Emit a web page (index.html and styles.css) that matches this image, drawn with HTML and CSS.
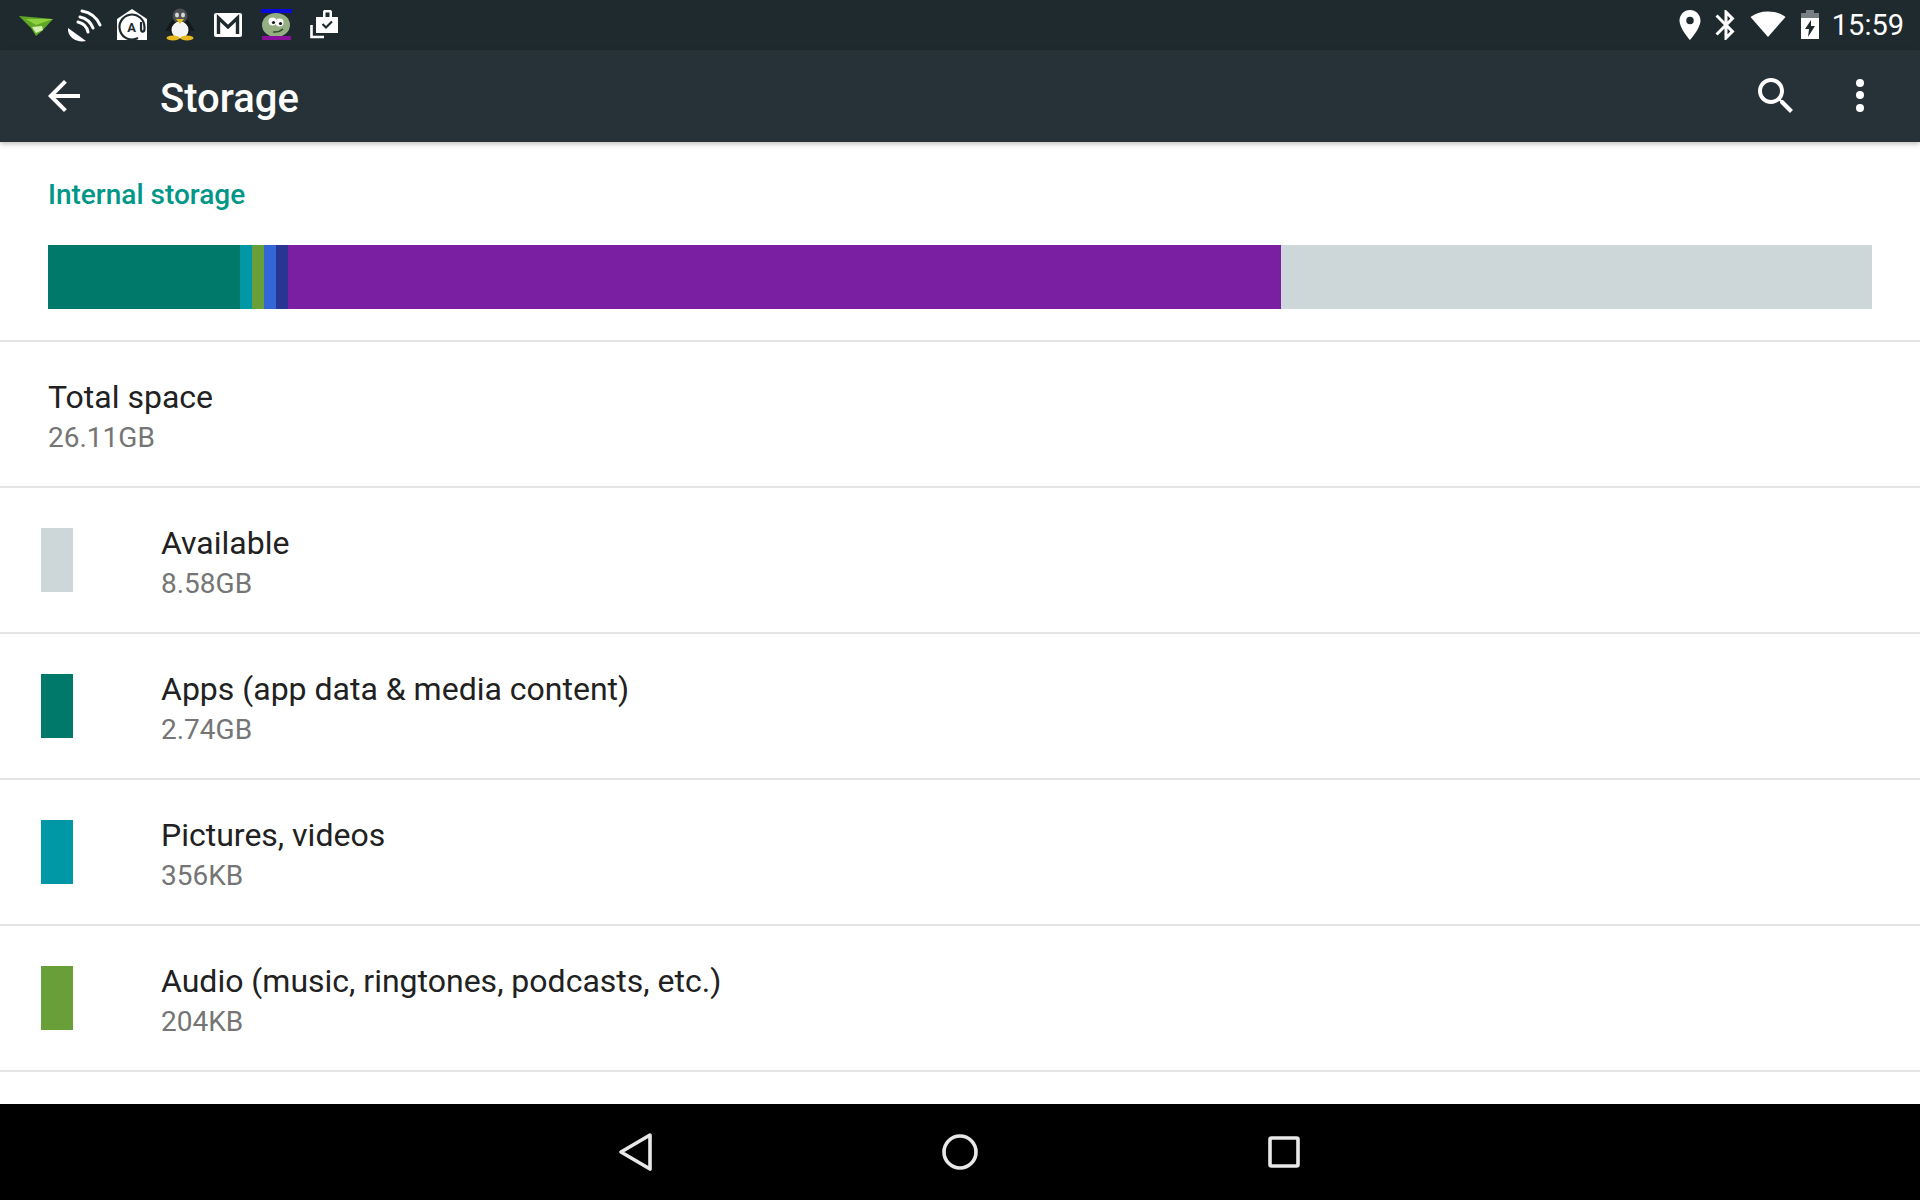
FILE: index.html
```html
<!DOCTYPE html>
<html lang="en">
<head>
    <meta charset="UTF-8">
    <title>Storage</title>
    <link rel="stylesheet" href="styles.css">
</head>
<body>
    <div class="status-bar">
        <div class="status-left">
            <span class="notif">
                <svg width="36" height="36" viewBox="0 0 36 36">
                    <path d="M1 9 L35 12 L24 24 L18 29 L13 21 Z" fill="#5fa826"/>
                    <path d="M8 12 L35 12 L18 18 Z" fill="#8fd13f"/>
                    <path d="M14 20 L24 19 L25 23 L18 26 Z" fill="#d4efb0"/>
                </svg>
            </span>
            <span class="notif">
                <svg width="36" height="36" viewBox="0 0 36 36">
                    <path d="M2 21 L20 34 C12 36 1 31 2 21 Z" fill="#fff"/>
                    <g fill="none" stroke="#fff" stroke-width="3" stroke-linecap="round">
                        <path d="M12 15 A13 13 0 0 1 22 25"/>
                        <path d="M14 10 A18 18 0 0 1 27 21"/>
                        <path d="M16 4 A24 24 0 0 1 34 18"/>
                    </g>
                </svg>
            </span>
            <span class="notif">
                <svg width="36" height="36" viewBox="0 0 36 36">
                    <path d="M3 12 L18 2 L33 12 V33 H3 Z" fill="#fff"/>
                    <path d="M24 31 A12.500 12.500 0 1 1 30.500 20 V22 C30.500 25.500 27 25.500 27 22 V15" fill="none" stroke="#1f2a2f" stroke-width="2.200"/>
                    <text x="17.500" y="25" class="aqua-a">A</text>
                </svg>
            </span>
            <span class="notif">
                <svg width="36" height="36" viewBox="0 0 36 36">
                    <path d="M9 15 L3 24 L9 23 Z M27 15 L33 24 L27 23 Z" fill="#14181a"/>
                    <ellipse cx="18" cy="21" rx="11" ry="11" fill="#14181a"/>
                    <ellipse cx="18" cy="9" rx="7.500" ry="7.500" fill="#4c5053"/>
                    <ellipse cx="15" cy="8" rx="2" ry="2.500" fill="#d8d8d8"/>
                    <ellipse cx="21" cy="8" rx="2" ry="2.500" fill="#d8d8d8"/>
                    <ellipse cx="18" cy="23" rx="8.500" ry="8.500" fill="#f4f4f4"/>
                    <path d="M14 12 L22 12 L18 17 Z" fill="#e8c02a"/>
                    <ellipse cx="11" cy="31" rx="6.500" ry="2.500" fill="#e8b81f"/>
                    <ellipse cx="25" cy="31" rx="6.500" ry="2.500" fill="#e8b81f"/>
                </svg>
            </span>
            <span class="notif">
                <svg width="36" height="36" viewBox="0 0 36 36">
                    <rect x="4" y="6" width="28" height="24" rx="2" fill="#fff"/>
                    <path d="M8.500 27 V11 L18 20 L27.500 11 V27" fill="none" stroke="#1f2a2f" stroke-width="3.400"/>
                </svg>
            </span>
            <span class="notif">
                <svg width="36" height="36" viewBox="0 0 36 36">
                    <rect x="3" y="2" width="31" height="4" fill="#0a0ad8"/>
                    <ellipse cx="18" cy="18" rx="14" ry="12" fill="#94b083"/>
                    <circle cx="14.500" cy="14.500" r="4" fill="#fff"/>
                    <circle cx="21.500" cy="15.500" r="4" fill="#fff"/>
                    <circle cx="15.500" cy="15.500" r="1.600" fill="#1a1a1a"/>
                    <circle cx="22.500" cy="16.500" r="1.600" fill="#1a1a1a"/>
                    <path d="M15 25 Q21 25.500 25 22" fill="none" stroke="#2c4a2c" stroke-width="1.400"/>
                    <rect x="4" y="29" width="29" height="4" fill="#8a109c"/>
                </svg>
            </span>
            <span class="notif">
                <svg width="36" height="36" viewBox="0 0 36 36">
                    <path d="M5.500 18 V30 H18" fill="none" stroke="#fff" stroke-width="2.600"/>
                    <path d="M10 10 H17 V5 C17 3.500 18 3 19 3 H24 C25 3 26 3.500 26 5 V10 H32 V26 H10 Z" fill="#fff"/>
                    <rect x="19.500" y="5.500" width="4" height="4.500" fill="#1f2a2f"/>
                    <path d="M16.500 17 L20 20.500 L26 14.500" fill="none" stroke="#1f2a2f" stroke-width="2.200"/>
                </svg>
            </span>
        </div>
        <div class="status-right">
            <svg class="sys-place" width="36" height="36" viewBox="0 0 24 24"><path fill="#fff" d="M12 2C8.130 2 5 5.130 5 9c0 5.250 7 13 7 13s7-7.750 7-13c0-3.870-3.130-7-7-7zm0 9.500a2.500 2.500 0 0 1 0-5 2.500 2.500 0 0 1 0 5z"/></svg>
            <svg class="sys-bt" width="36" height="36" viewBox="0 0 24 24"><path fill="#fff" d="M17.710 7.710L12 2h-1v7.590L6.410 5 5 6.410 10.590 12 5 17.590 6.410 19 11 14.410V22h1l5.710-5.710-4.300-4.290 4.300-4.290zM13 5.830l1.880 1.880L13 9.590V5.830zm1.880 10.460L13 18.170v-3.760l1.880 1.880z"/></svg>
            <svg class="sys-wifi" width="36" height="30" viewBox="0 0 36 30"><path fill="#fff" d="M18 27 L0.500 7 C5 3.500 11 1.500 18 1.500 S31 3.500 35.500 7 Z"/></svg>
            <svg class="sys-batt" width="20" height="30" viewBox="0 0 20 30">
                <path fill="#fff" opacity="0.4" d="M6 0 H14 V3 H19 V8 H1 V3 H6 Z"/>
                <path fill="#fff" d="M1 8 H19 V29 H1 Z M11 10 L5 19 H9 L8 27 L15 16 H11 Z" fill-rule="evenodd"/>
            </svg>
            <span class="clock">15:59</span>
        </div>
    </div>

    <div class="app-bar">
        <svg class="back-icon" width="48" height="48" viewBox="0 0 24 24"><path fill="#fff" d="M20 11H7.830l5.590-5.590L12 4l-8 8 8 8 1.410-1.410L7.830 13H20v-2z"/></svg>
        <div class="app-title">Storage</div>
        <svg class="search-icon" width="48" height="48" viewBox="0 0 24 24"><path fill="#fff" d="M15.500 14h-.790l-.280-.270C15.410 12.590 16 11.110 16 9.500 16 5.910 13.090 3 9.500 3S3 5.910 3 9.500 5.910 16 9.500 16c1.610 0 3.090-.590 4.230-1.570l.270.280v.790l5 4.990L20.490 19l-4.990-5zm-6 0C7.010 14 5 11.990 5 9.500S7.010 5 9.500 5 14 7.010 14 9.500 11.990 14 9.500 14z"/></svg>
        <svg class="more-icon" width="12" height="36" viewBox="0 0 12 36">
            <circle cx="6" cy="5" r="4" fill="#fff"/>
            <circle cx="6" cy="17" r="4" fill="#fff"/>
            <circle cx="6" cy="30" r="4" fill="#fff"/>
        </svg>
    </div>

    <div class="content">
        <div class="section-title">Internal storage</div>
        <div class="usage-bar">
            <div class="seg seg-apps"></div>
            <div class="seg seg-pics"></div>
            <div class="seg seg-audio"></div>
            <div class="seg seg-blue"></div>
            <div class="seg seg-indigo"></div>
            <div class="seg seg-purple"></div>
            <div class="seg seg-free"></div>
        </div>

        <div class="row row-total">
            <div class="row-text">
                <div class="row-name">Total space</div>
                <div class="row-size">26.11GB</div>
            </div>
        </div>
        <div class="row">
            <div class="swatch sw-free"></div>
            <div class="row-text">
                <div class="row-name">Available</div>
                <div class="row-size">8.58GB</div>
            </div>
        </div>
        <div class="row">
            <div class="swatch sw-apps"></div>
            <div class="row-text">
                <div class="row-name">Apps (app data &amp; media content)</div>
                <div class="row-size">2.74GB</div>
            </div>
        </div>
        <div class="row">
            <div class="swatch sw-pics"></div>
            <div class="row-text">
                <div class="row-name">Pictures, videos</div>
                <div class="row-size">356KB</div>
            </div>
        </div>
        <div class="row">
            <div class="swatch sw-audio"></div>
            <div class="row-text">
                <div class="row-name">Audio (music, ringtones, podcasts, etc.)</div>
                <div class="row-size">204KB</div>
            </div>
        </div>
    </div>

    <div class="nav-bar">
        <svg width="40" height="40" viewBox="0 0 40 40"><path d="M34 3 L5 20 L34 37 Z" fill="none" stroke="#e8e8e8" stroke-width="3.600" stroke-linejoin="round"/></svg>
        <svg width="40" height="40" viewBox="0 0 40 40"><circle cx="20" cy="20" r="16" fill="none" stroke="#e8e8e8" stroke-width="3.600"/></svg>
        <svg width="40" height="40" viewBox="0 0 40 40"><rect x="6" y="6" width="28" height="28" rx="1.500" fill="none" stroke="#e8e8e8" stroke-width="3.600"/></svg>
    </div>
</body>
</html>
```

FILE: styles.css
```css
:root {
    --color-apps: #00796b;
    --color-pics: #0097a7;
    --color-audio: #689f38;
    --color-blue: #3367d6;
    --color-indigo: #283593;
    --color-purple: #7b1fa2;
    --color-free: #cdd7d9;
}

html, body {
    height: 100%;
}

body {
    margin: 0;
    display: flex;
    flex-direction: column;
    height: 1200px;
    overflow: hidden;
    background-color: white;
    font-family: Roboto, "Noto Sans", sans-serif;
}

.status-bar {
    height: 50px;
    flex-shrink: 0;
    display: flex;
    align-items: center;
    justify-content: space-between;
    background-color: #1f2a2f;
    color: white;
}

.status-left {
    display: flex;
    padding-left: 12px;
}

.notif {
    width: 48px;
    height: 36px;
    display: flex;
    justify-content: center;
}

.aqua-a {
    font-family: Roboto, sans-serif;
    font-size: 13px;
    font-weight: 700;
    text-anchor: middle;
    fill: #1f2a2f;
}

.status-right {
    display: flex;
    align-items: center;
    padding-right: 16px;
}

.sys-bt {
    margin-right: 6px;
}

.sys-wifi {
    margin-right: 14px;
}

.sys-batt {
    margin-right: 12px;
}

.clock {
    font-size: 29px;
    line-height: 50px;
}

.app-bar {
    height: 92px;
    flex-shrink: 0;
    display: flex;
    align-items: center;
    padding: 0 0 0 40px;
    background-color: #263238;
    box-shadow: 0 2px 5px rgba(0,0,0,0.25);
    position: relative;
}

.back-icon {
    margin-right: 72px;
}

.app-title {
    flex: 1;
    padding-top: 4px;
    color: white;
    font-size: 40px;
    font-weight: 500;
}

.search-icon {
    margin-right: 54px;
}

.more-icon {
    margin-right: 54px;
}

.content {
    flex: 1;
    overflow: hidden;
}

.section-title {
    padding: 33px 48px 0;
    line-height: 40px;
    font-size: 28px;
    font-weight: 500;
    color: #009688;
}

.usage-bar {
    display: flex;
    height: 64px;
    margin: 30px 48px 31px;
}

.seg-apps { width: 192px; background-color: var(--color-apps); }
.seg-pics { width: 12px; background-color: var(--color-pics); }
.seg-audio { width: 12px; background-color: var(--color-audio); }
.seg-blue { width: 12px; background-color: var(--color-blue); }
.seg-indigo { width: 12px; background-color: var(--color-indigo); }
.seg-purple { width: 993px; background-color: var(--color-purple); }
.seg-free { flex: 1; background-color: var(--color-free); }

.row {
    height: 144px;
    display: flex;
    align-items: center;
    border-top: 2px solid #e4e4e4;
    padding-left: 41px;
}

.row:last-child {
    border-bottom: 2px solid #e4e4e4;
}

.row-total {
    padding-left: 48px;
}

.swatch {
    width: 32px;
    height: 64px;
    margin-right: 88px;
}

.sw-free { background-color: var(--color-free); }
.sw-apps { background-color: var(--color-apps); }
.sw-pics { background-color: var(--color-pics); }
.sw-audio { background-color: var(--color-audio); }

.row-text {
    padding-top: 4px;
}

.row-name {
    font-size: 32px;
    line-height: 42px;
    color: #212121;
}

.row-size {
    margin-top: 1px;
    font-size: 28px;
    line-height: 38px;
    color: #757575;
}

.nav-bar {
    height: 96px;
    flex-shrink: 0;
    display: flex;
    align-items: center;
    justify-content: center;
    gap: 284px;
    background-color: black;
}
```
